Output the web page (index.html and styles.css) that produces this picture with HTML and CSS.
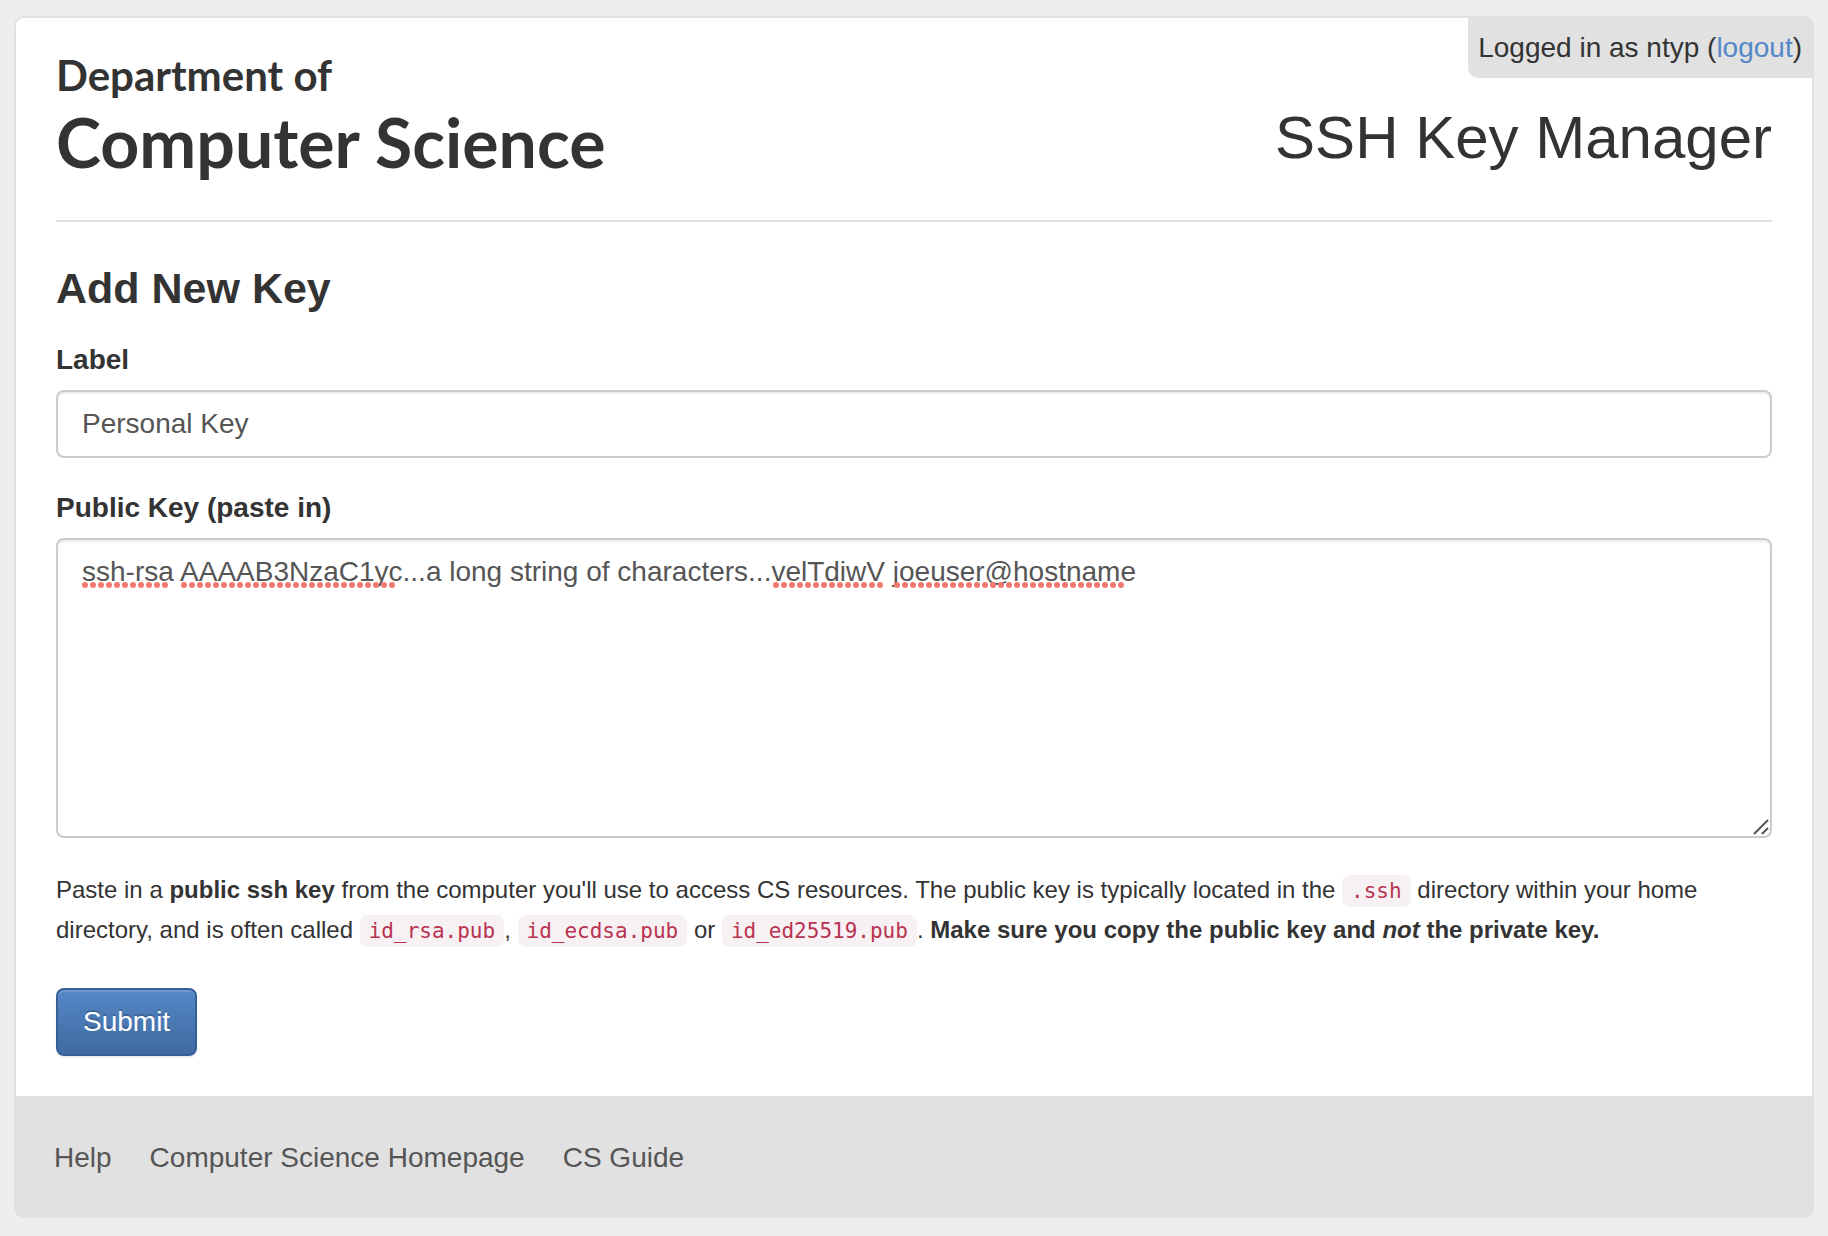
FILE: index.html
```html
<!DOCTYPE html>
<html lang="en">
<head>
<meta charset="utf-8">
<meta name="viewport" content="width=device-width, initial-scale=1">
<title>SSH Key Manager</title>
<link rel="stylesheet" href="styles.css">
</head>
<body>
<div class="card">
  <div class="session">Logged in as ntyp (<a href="#logout">logout</a>)</div>
  <div class="content">
    <header class="header">
      <div class="logo">
        <span class="logo-small">Department of</span>
        <span class="logo-large">Computer Science</span>
      </div>
      <h1 class="title">SSH Key Manager</h1>
    </header>
    <main>
      <h2 class="heading">Add New Key</h2>
      <form class="form">
        <div class="field">
          <label for="key-label">Label</label>
          <input class="control" id="key-label" type="text" value="Personal Key">
        </div>
        <div class="field">
          <label for="key-body">Public Key (paste in)</label>
          <div class="key-box">
            <textarea class="control control-area" id="key-body" spellcheck="false">ssh-rsa AAAAB3NzaC1yc...a long string of characters...velTdiwV joeuser@hostname</textarea>
            <svg class="spelling" width="1100" height="6" aria-hidden="true">
              <path d="M3 3h81M102 3h209M694 3h105M815 3h225"/>
            </svg>
            <svg class="grip" width="18" height="18" aria-hidden="true">
              <path d="M2 16L16 2M10 16L16 10"/>
            </svg>
          </div>
        </div>
        <p class="hint">Paste in a <strong>public ssh key</strong> from the computer you'll use to access CS resources. The public key is typically located in the <code>.ssh</code> directory within your home directory, and is often called <code>id_rsa.pub</code>, <code>id_ecdsa.pub</code> or <code>id_ed25519.pub</code>. <strong>Make sure you copy the public key and <em>not</em> the private key.</strong></p>
        <button class="submit" type="submit">Submit</button>
      </form>
    </main>
  </div>
  <footer class="footer">
    <a href="#help">Help</a>
    <a href="#home">Computer Science Homepage</a>
    <a href="#guide">CS Guide</a>
  </footer>
</div>
</body>
</html>
```
FILE: styles.css
```css
* {
  box-sizing: border-box;
}

body {
  margin: 0;
  padding: 16px 14px;
  background: #eee;
  color: #333;
  font: 28px/40px "Liberation Sans", Arial, sans-serif;
}

.card {
  position: relative;
  border: 2px solid #e1e1e1;
  border-radius: 10px;
  background: #fff;
}

.session {
  position: absolute;
  top: 0;
  right: 0;
  padding: 10px;
  border-radius: 0 0 0 10px;
  background: #e1e1e1;
}

.session a {
  color: #5588c8;
  text-decoration: none;
}

.content {
  padding: 32px 40px 40px;
}

.header {
  display: flex;
  justify-content: space-between;
  align-items: flex-end;
  padding-bottom: 36px;
  border-bottom: 2px solid #e1e1e1;
}

.logo {
  display: flex;
  flex-direction: column;
  font-family: Lato, sans-serif;
  font-weight: 700;
}

.logo-small {
  font-size: 42px;
  line-height: 50px;
}

.logo-large {
  font-size: 68px;
  line-height: 84px;
}

.title {
  margin: 0;
  padding-bottom: 12px;
  font-size: 60px;
  font-weight: 400;
  line-height: 68px;
}

.heading {
  margin: 42px 0 28px;
  font-size: 43px;
  font-weight: 700;
  line-height: 48px;
}

.form {
  display: flex;
  flex-direction: column;
}

.field {
  display: flex;
  flex-direction: column;
  gap: 10px;
  margin-bottom: 30px;
}

.field label {
  font-weight: 700;
}

.control {
  display: block;
  width: 100%;
  height: 68px;
  padding: 12px 24px;
  border: 2px solid #ccc;
  border-radius: 8px;
  background: #fff;
  box-shadow: inset 0 2px 2px rgba(0, 0, 0, 0.075);
  color: #555;
  font: inherit;
}

.control-area {
  height: 300px;
  resize: vertical;
}

.control-area::-webkit-resizer {
  background: transparent;
}

.key-box {
  position: relative;
}

.spelling {
  position: absolute;
  top: 44px;
  left: 26px;
  pointer-events: none;
}

.spelling path {
  fill: none;
  stroke: #f27a6e;
  stroke-width: 6;
  stroke-linecap: round;
  stroke-dasharray: 0 8;
}

.grip {
  position: absolute;
  right: 2px;
  bottom: 2px;
  pointer-events: none;
}

.grip path {
  fill: none;
  stroke: #555;
  stroke-width: 2;
}

.hint {
  margin: 2px 0 38px;
  font-size: 24px;
}

code {
  padding: 4px 9px;
  border-radius: 8px;
  background: #f7f1f3;
  color: #b93351;
  font: 21px "DejaVu Sans Mono", monospace;
}

.submit {
  align-self: flex-start;
  height: 68px;
  padding: 0 25px;
  border: 2px solid #365f96;
  border-radius: 8px;
  background: linear-gradient(#5588c8, #3e6a9f);
  box-shadow: inset 0 2px 0 rgba(255, 255, 255, 0.15), 0 2px 2px rgba(0, 0, 0, 0.075);
  color: #fff;
  font: inherit;
  text-shadow: 0 -2px 0 rgba(0, 0, 0, 0.2);
}

.footer {
  display: flex;
  flex-wrap: wrap;
  gap: 38px;
  padding: 42px 38px 38px;
  background: #e1e1e1;
}

.footer a {
  color: #555;
  text-decoration: none;
}
```
